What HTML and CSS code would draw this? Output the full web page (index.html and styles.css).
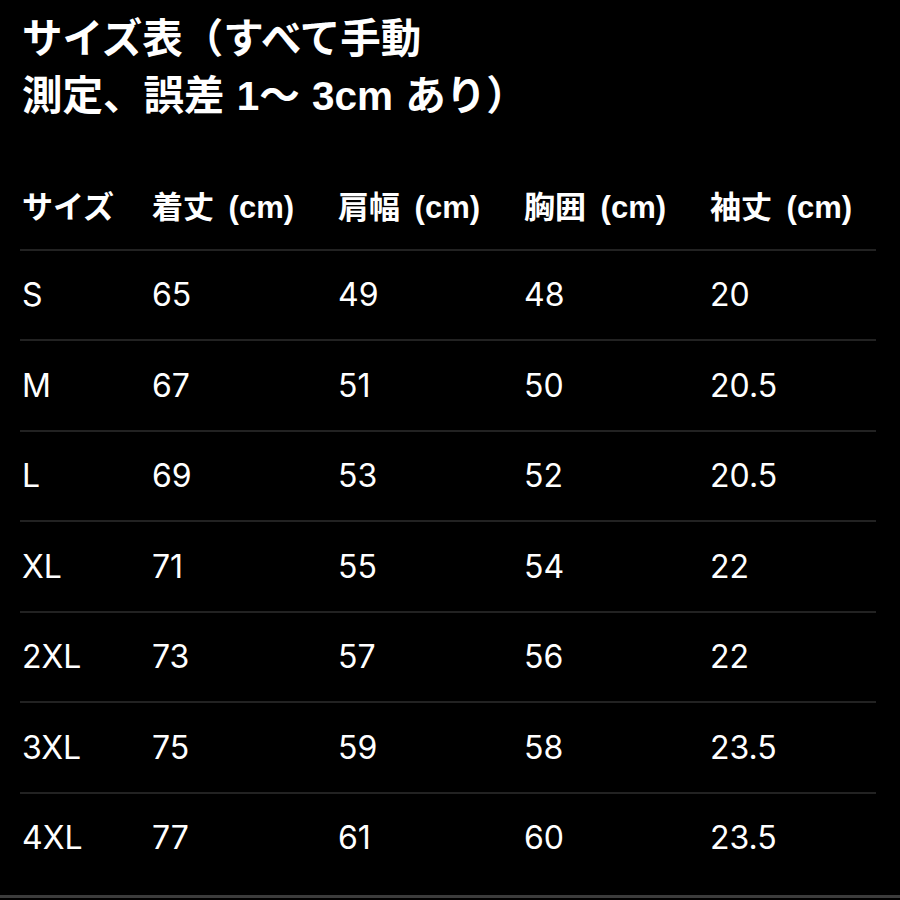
FILE: index.html
```html
<!DOCTYPE html>
<html lang="ja">
<head>
<meta charset="utf-8">
<title>サイズ表</title>
<link rel="stylesheet" href="styles.css">
</head>
<body>
<div class="page">
  <h1 class="title">サイズ表（すべて手動<br>測定、誤差 1～ 3cm あり）</h1>
  <div class="table">
    <div class="row head">
      <div>サイズ</div><div>着丈 (cm)</div><div>肩幅 (cm)</div><div>胸囲 (cm)</div><div>袖丈 (cm)</div>
    </div>
    <div class="row"><div>S</div><div>65</div><div>49</div><div>48</div><div>20</div></div>
    <div class="row"><div>M</div><div>67</div><div>51</div><div>50</div><div>20.5</div></div>
    <div class="row"><div>L</div><div>69</div><div>53</div><div>52</div><div>20.5</div></div>
    <div class="row"><div>XL</div><div>71</div><div>55</div><div>54</div><div>22</div></div>
    <div class="row"><div>2XL</div><div>73</div><div>57</div><div>56</div><div>22</div></div>
    <div class="row"><div>3XL</div><div>75</div><div>59</div><div>58</div><div>23.5</div></div>
    <div class="row last"><div>4XL</div><div>77</div><div>61</div><div>60</div><div>23.5</div></div>
  </div>
  <div class="bottom-line"></div>
</div>
</body>
</html>
```
FILE: styles.css
```css
html, body {
  margin: 0;
  padding: 0;
  background: #000;
}
.page {
  width: 900px;
  height: 900px;
  overflow: hidden;
  background: #000;
  color: #fff;
  font-family: Inter, "Noto Sans CJK JP", sans-serif;
}
.title {
  margin: 0;
  padding: 11px 0 0 22px;
  font-family: "Liberation Sans", "Noto Sans CJK JP", sans-serif;
  font-weight: 700;
  font-size: 40.5px;
  line-height: 57px;
  word-spacing: 1px;
}
.table {
  margin: 35px 24px 0 20px;
}
.row {
  display: grid;
  grid-template-columns: 130px 186px 186px 186px 1fr;
  align-items: center;
  height: 88.5px;
  padding-left: 2px;
  border-bottom: 2px solid #222;
  font-size: 32px;
  font-weight: 400;
}
.row.last {
  border-bottom: none;
}
.row.head {
  font-family: "Liberation Sans", "Noto Sans CJK JP", sans-serif;
  font-size: 31px;
  font-weight: 700;
  word-spacing: 6px;
}
.bottom-line {
  margin-top: 13px;
  height: 3px;
  background: #3c3c3c;
}
```
